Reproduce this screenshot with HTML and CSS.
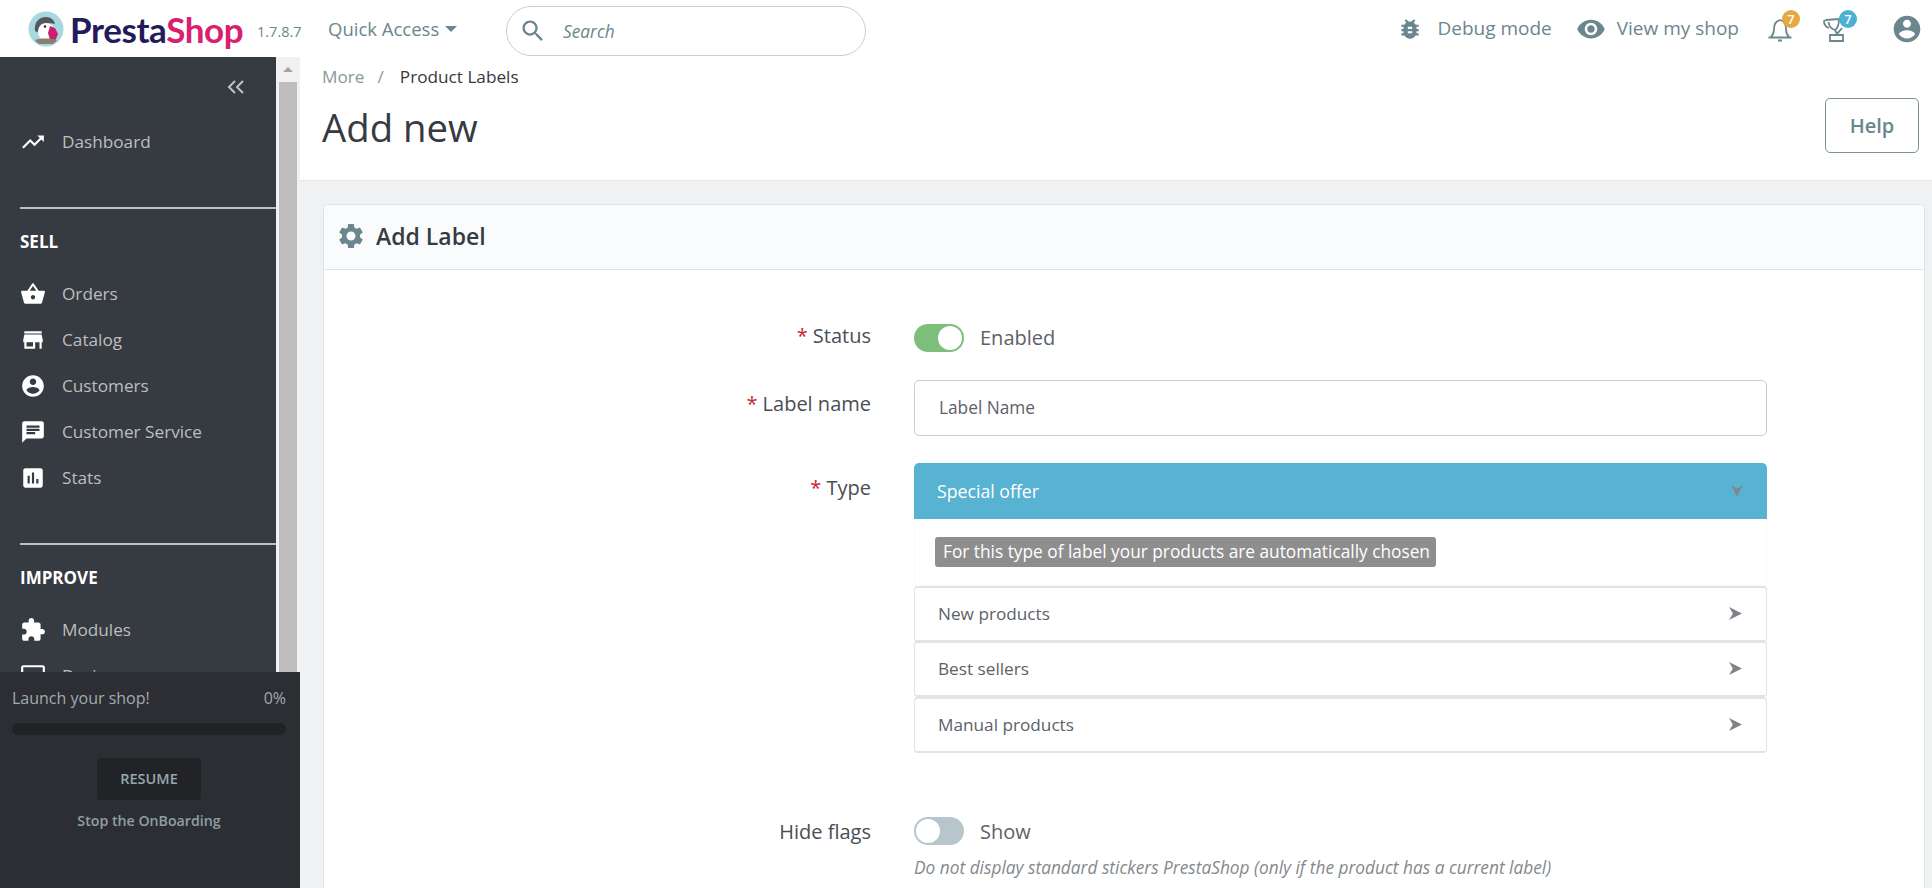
FILE: index.html
```html
<!DOCTYPE html>
<html lang="en">
<head>
<meta charset="utf-8">
<title>Add new - Product Labels</title>
<link rel="stylesheet" href="styles.css">
</head>
<body>
<header class="topbar">
  <div class="logo">
    <svg class="puffin" viewBox="0 0 36 36">
      <circle cx="18" cy="18" r="17.5" fill="#a6d8e0"/>
      <path d="M7 20C6 11 11 6 18 6c5 0 8 3 9 7-3-1-6-1-9 0-2 1-3 1-5 3l-2 6z" fill="#55575c"/>
      <path d="M10 21c0-5 3-9 8-9 5 0 8 3 8 8 0 6-4 9-8 9s-8-3-8-8z" fill="#fff"/>
      <circle cx="17" cy="15.5" r="1.3" fill="#333"/>
      <path d="M22 15l5 2 3 6-3 7-5-1-2-7z" fill="#c91f6c"/>
      <path d="M7 29c5-2 17-2 22 0-1 2-3 3-4 4H11c-1-1-3-2-4-4z" fill="#8a7f70"/>
    </svg>
    <span class="wordmark"><span class="presta">Presta</span><span class="shop">Shop</span></span>
  </div>
  <span class="version">1.7.8.7</span>
  <span class="quick">Quick Access<i class="caret"></i></span>
  <div class="search">
    <svg class="ic ic-search" viewBox="0 0 24 24"><path d="M15.5 14h-.79l-.28-.27C15.41 12.59 16 11.11 16 9.5 16 5.91 13.09 3 9.5 3S3 5.91 3 9.5 5.91 16 9.5 16c1.61 0 3.09-.59 4.23-1.57l.27.28v.79l5 4.99L20.49 19l-4.99-5zm-6 0C7.01 14 5 11.99 5 9.5S7.01 5 9.5 5 14 7.01 14 9.5 11.99 14 9.5 14z"/></svg>
    <span>Search</span>
  </div>
  <nav class="topright">
    <span class="toplink toplink-debug">
      <svg class="ic ic-top" viewBox="0 0 24 24"><path d="M20 8h-2.81c-.45-.78-1.07-1.45-1.82-1.96L17 4.41 15.59 3l-2.17 2.17C12.96 5.06 12.49 5 12 5c-.49 0-.96.06-1.41.17L8.41 3 7 4.41l1.62 1.63C7.88 6.55 7.26 7.22 6.81 8H4v2h2.09c-.05.33-.09.66-.09 1v1H4v2h2v1c0 .34.04.67.09 1H4v2h2.81c1.04 1.79 2.97 3 5.19 3s4.15-1.21 5.19-3H20v-2h-2.09c.05-.33.09-.66.09-1v-1h2v-2h-2v-1c0-.34-.04-.67-.09-1H20V8zm-6 8h-4v-2h4v2zm0-4h-4v-2h4v2z"/></svg>
      <span class="toptext">Debug mode</span>
    </span>
    <span class="toplink toplink-view">
      <svg class="ic ic-eye" viewBox="0 0 24 24"><path d="M12 4.5C7 4.5 2.73 7.61 1 12c1.73 4.39 6 7.5 11 7.5s9.27-3.11 11-7.5c-1.73-4.39-6-7.5-11-7.5zM12 17c-2.76 0-5-2.24-5-5s2.24-5 5-5 5 2.24 5 5-2.24 5-5 5zm0-8c-1.66 0-3 1.34-3 3s1.34 3 3 3 3-1.34 3-3-1.34-3-3-3z"/></svg>
      <span class="toptext">View my shop</span>
    </span>
    <span class="notif notif-bell">
      <svg class="ic ic-bell" viewBox="0 0 30 30"><path class="outline" d="M6 23c2-2 3-4 3-8 0-5 2-8 6-9M15 6c4 1 6 4 6 9 0 4 1 6 3 8M3.500 23.500h23M13 26.500h4"/></svg>
      <b class="badge badge-orange">7</b>
    </span>
    <span class="notif notif-trophy">
      <svg class="ic ic-bell" viewBox="0 0 30 30"><path class="outline" d="M5 6l13-1c0 5-1 9-4 11-3-1-6-4-6.500-8M5 6l-2 1c0 3 2 6 5 7M14 16l2 4 5-6M9 21h13v6H9z"/></svg>
      <b class="badge badge-blue">7</b>
    </span>
    <svg class="ic ic-avatar" viewBox="0 0 24 24"><path d="M12 2C6.48 2 2 6.48 2 12s4.48 10 10 10 10-4.48 10-10S17.52 2 12 2zm0 3c1.66 0 3 1.34 3 3s-1.34 3-3 3-3-1.34-3-3 1.34-3 3-3zm0 14.2c-2.5 0-4.71-1.28-6-3.22.03-1.99 4-3.08 6-3.08 1.99 0 5.97 1.09 6 3.08-1.29 1.94-3.5 3.22-6 3.22z"/></svg>
  </nav>
</header>

<div class="layout">
  <aside class="sidebar">
    <div class="menu">
      <div class="collapse">
        <svg class="ic-collapse" viewBox="0 0 18 14"><path d="M8 1L2 7l6 6M16 1l-6 6 6 6"/></svg>
      </div>
      <a class="item item-dash">
        <svg class="ic ic-side" viewBox="0 0 24 24"><path d="M16 6l2.29 2.29-4.88 4.88-4-4L2 16.59 3.41 18l6-6 4 4 6.3-6.29L22 12V6z"/></svg>
        Dashboard
      </a>
      <div class="rule rule-first"></div>
      <div class="section">SELL</div>
      <a class="item">
        <svg class="ic ic-side" viewBox="0 0 24 24"><path d="M17.21 9l-4.38-6.56c-.19-.28-.51-.42-.83-.42-.32 0-.64.14-.83.43L6.79 9H2c-.55 0-1 .45-1 1 0 .09.01.18.04.27l2.54 9.27c.23.84 1 1.46 1.92 1.46h13c.92 0 1.69-.62 1.93-1.46l2.54-9.27L23 10c0-.55-.45-1-1-1h-4.79zM9 9l3-4.4L15 9H9zm3 8c-1.1 0-2-.9-2-2s.9-2 2-2 2 .9 2 2-.9 2-2 2z"/></svg>
        Orders
      </a>
      <a class="item">
        <svg class="ic ic-side" viewBox="0 0 24 24"><path d="M20 4H4v2h16V4zm1 10v-2l-1-5H4l-1 5v2h1v6h10v-6h4v6h2v-6h1zm-9 4H6v-4h6v4z"/></svg>
        Catalog
      </a>
      <a class="item">
        <svg class="ic ic-side" viewBox="0 0 24 24"><path d="M12 2C6.48 2 2 6.48 2 12s4.48 10 10 10 10-4.48 10-10S17.52 2 12 2zm0 3c1.66 0 3 1.34 3 3s-1.34 3-3 3-3-1.34-3-3 1.34-3 3-3zm0 14.2c-2.5 0-4.71-1.28-6-3.22.03-1.99 4-3.08 6-3.08 1.99 0 5.97 1.09 6 3.08-1.29 1.94-3.5 3.22-6 3.22z"/></svg>
        Customers
      </a>
      <a class="item">
        <svg class="ic ic-side" viewBox="0 0 24 24"><path d="M20 2H4c-1.1 0-1.99.9-1.99 2L2 22l4-4h14c1.1 0 2-.9 2-2V4c0-1.1-.9-2-2-2zM6 9h12v2H6V9zm8 5H6v-2h8v2zm4-6H6V6h12v2z"/></svg>
        Customer Service
      </a>
      <a class="item">
        <svg class="ic ic-side" viewBox="0 0 24 24"><path d="M19 3H5c-1.1 0-2 .9-2 2v14c0 1.1.9 2 2 2h14c1.1 0 2-.9 2-2V5c0-1.1-.9-2-2-2zM9 17H7v-7h2v7zm4 0h-2V7h2v10zm4 0h-2v-4h2v4z"/></svg>
        Stats
      </a>
      <div class="rule rule-second"></div>
      <div class="section">IMPROVE</div>
      <a class="item">
        <svg class="ic ic-side" viewBox="0 0 24 24"><path d="M20.5 11H19V7c0-1.1-.9-2-2-2h-4V3.5C13 2.12 11.88 1 10.5 1S8 2.12 8 3.5V5H4c-1.1 0-1.99.9-1.99 2v3.8H3.5c1.49 0 2.7 1.21 2.7 2.7s-1.21 2.7-2.7 2.7H2V20c0 1.1.9 2 2 2h3.8v-1.5c0-1.49 1.21-2.7 2.7-2.7 1.49 0 2.7 1.21 2.7 2.7V22H17c1.1 0 2-.9 2-2v-4h1.5c1.38 0 2.5-1.12 2.5-2.5S21.88 11 20.5 11z"/></svg>
        Modules
      </a>
      <a class="item">
        <svg class="ic ic-side" viewBox="0 0 24 24"><path d="M21 2H3c-1.1 0-2 .9-2 2v12c0 1.1.9 2 2 2h7v2H8v2h8v-2h-2v-2h7c1.1 0 2-.9 2-2V4c0-1.1-.9-2-2-2zm0 14H3V4h18v12z"/></svg>
        Design
      </a>
    </div>
    <div class="scrollbar">
      <div class="scroll-up"><i></i></div>
      <div class="scroll-thumb"></div>
    </div>
    <div class="onboarding">
      <div class="ob-head"><span>Launch your shop!</span><span>0%</span></div>
      <div class="ob-bar"></div>
      <div class="ob-btn">RESUME</div>
      <div class="ob-stop">Stop the OnBoarding</div>
    </div>
  </aside>

  <main class="main">
    <div class="pagehead">
      <div class="crumbs"><span class="crumb-more">More</span><span class="crumb-sep">/</span><span class="crumb-cur">Product Labels</span></div>
      <div class="titlerow">
        <h1>Add new</h1>
        <a class="help">Help</a>
      </div>
    </div>
    <section class="card">
      <div class="card-head">
        <svg class="ic ic-gear" viewBox="0 0 24 24"><path d="M19.14 12.94c.04-.3.06-.61.06-.94 0-.32-.02-.64-.07-.94l2.03-1.58c.18-.14.23-.41.12-.61l-1.92-3.32c-.12-.22-.37-.29-.59-.22l-2.39.96c-.5-.38-1.03-.7-1.62-.94l-.36-2.54c-.04-.24-.24-.41-.48-.41h-3.84c-.24 0-.43.17-.47.41l-.36 2.54c-.59.24-1.13.57-1.62.94l-2.39-.96c-.22-.08-.47 0-.59.22L2.74 8.87c-.12.21-.08.47.12.61l2.03 1.58c-.05.3-.09.63-.09.94s.02.64.07.94l-2.03 1.58c-.18.14-.23.41-.12.61l1.92 3.32c.12.22.37.29.59.22l2.39-.96c.5.38 1.03.7 1.62.94l.36 2.54c.05.24.24.41.48.41h3.84c.24 0 .44-.17.47-.41l.36-2.54c.59-.24 1.13-.56 1.62-.94l2.39.96c.22.08.47 0 .59-.22l1.92-3.32c.12-.22.07-.47-.12-.61l-2.01-1.58zM12 15.6c-1.98 0-3.6-1.62-3.6-3.6s1.62-3.6 3.6-3.6 3.6 1.62 3.6 3.6-1.62 3.6-3.6 3.6z"/></svg>
        <span>Add Label</span>
      </div>
      <div class="form">
        <div class="row row-status">
          <label class="lbl lbl-status"><em>*</em> Status</label>
          <div class="field switchline">
            <span class="switch switch-on"><i></i></span>
            <span class="switch-text">Enabled</span>
          </div>
        </div>
        <div class="row row-name">
          <label class="lbl lbl-name"><em>*</em> Label name</label>
          <div class="field"><div class="input">Label Name</div></div>
        </div>
        <div class="row row-type">
          <label class="lbl lbl-type"><em>*</em> Type</label>
          <div class="field">
            <div class="acc-active">
              <span>Special offer</span>
              <svg class="chev" viewBox="0 0 14 14"><path d="M7 13L1 1l6 3.500L13 1z"/></svg>
            </div>
            <div class="acc-body"><span class="chip">For this type of label your products are automatically chosen</span></div>
            <div class="acc-item"><span>New products</span><svg class="arrow" viewBox="0 0 14 14"><path d="M13 7L1 1l3.500 6L1 13z"/></svg></div>
            <div class="acc-item"><span>Best sellers</span><svg class="arrow" viewBox="0 0 14 14"><path d="M13 7L1 1l3.500 6L1 13z"/></svg></div>
            <div class="acc-item"><span>Manual products</span><svg class="arrow" viewBox="0 0 14 14"><path d="M13 7L1 1l3.500 6L1 13z"/></svg></div>
          </div>
        </div>
        <div class="row row-flags">
          <label class="lbl lbl-flags">Hide flags</label>
          <div class="field">
            <div class="switchline">
              <span class="switch switch-off"><i></i></span>
              <span>Show</span>
            </div>
            <p class="hint">Do not display standard stickers PrestaShop (only if the product has a current label)</p>
          </div>
        </div>
      </div>
    </section>
  </main>
</div>
</body>
</html>
```
FILE: styles.css
```css
* { box-sizing: border-box; }
html, body { margin: 0; height: 100%; overflow: hidden; }
body { font-family: "Open Sans", "Liberation Sans", sans-serif; color: #363a41; background: #eff1f2; }
.ic { fill: currentColor; display: block; flex: none; }

/* top bar */
.topbar { height: 57px; background: #fff; display: flex; align-items: center; position: relative; }
.logo { display: flex; align-items: center; margin-left: 28px; width: 229px; flex: none; gap: 6px; }
.puffin { width: 36px; height: 36px; flex: none; }
.wordmark { font-family: Lato, sans-serif; font-weight: 700; font-size: 35px; letter-spacing: -0.4px; line-height: 36px; }
.presta { color: #251b5b; }
.shop { color: #d8206f; }
.version { font-size: 14.5px; color: #6c868e; width: 71px; flex: none; padding-top: 5px; }
.quick { font-size: 18.5px; color: #6c868e; width: 178px; flex: none; display: flex; align-items: center; }
.caret { width: 0; height: 0; border: 6px solid transparent; border-top-color: #6c868e; border-bottom: 0; margin-left: 6px; }
.search { width: 360px; height: 50px; margin-top: 5px; border: 1px solid #c5d0d4; border-radius: 25px; display: flex; align-items: center; padding-left: 12px; color: #6c868e; font-style: italic; font-size: 17.3px; flex: none; }
.ic-search { width: 28px; height: 28px; margin-right: 16px; color: #6c868e; }
.topright { margin-left: auto; display: flex; align-items: center; padding-right: 9px; color: #6c868e; font-size: 19px; }
.toplink { display: flex; align-items: center; }
.toplink-debug { margin-right: 24px; }
.toplink-view { margin-right: 26px; }
.toptext { margin-bottom: 2px; }
.ic-top { width: 26px; height: 26px; margin-right: 14px; }
.ic-eye { width: 30px; height: 30px; margin-right: 11px; }
.notif { position: relative; display: block; }
.notif-bell { margin-right: 26px; }
.notif-trophy { margin-right: 40px; }
.ic-bell { width: 30px; height: 30px; }
.outline { fill: none; stroke: currentColor; stroke-width: 1.8; }
.badge { position: absolute; top: -4px; width: 18px; height: 18px; border-radius: 50%; color: #fff; font-size: 13px; font-weight: 600; line-height: 18px; text-align: center; }
.badge-orange { background: #e5a93f; left: 17px; }
.badge-blue { background: #4bb0d3; left: 18px; }
.ic-avatar { width: 32px; height: 32px; }

/* layout */
.layout { display: flex; height: 831px; }

/* sidebar */
.sidebar { width: 300px; flex: none; display: flex; position: relative; overflow: hidden; background: #f1f1f1; }
.menu { width: 276px; flex: none; background: #363a41; color: #bebebe; font-size: 17.2px; }
.collapse { height: 60px; display: flex; justify-content: flex-end; align-items: center; padding: 0 31px 0 0; }
.ic-collapse { width: 18px; height: 14px; fill: none; stroke: #bdc5c9; stroke-width: 2; }
.item { height: 46px; display: flex; align-items: center; padding: 0 0 2px 20px; }
.item-dash { margin-top: 2px; }
.ic-side { width: 26px; height: 26px; color: #fff; margin: 2px 16px 0 0; }
.rule { height: 2px; background: #bcc3c7; margin-left: 20px; }
.rule-first { margin-top: 42px; }
.rule-second { margin-top: 42px; }
.section { color: #fff; font-weight: 700; font-size: 17px; height: 62px; padding: 21px 0 0 20px; line-height: 24px; }
.scrollbar { width: 24px; flex: none; background: #f1f1f1; padding: 0 3px; }
.scroll-up { height: 25px; display: flex; align-items: center; justify-content: center; }
.scroll-up i { width: 0; height: 0; border: 5px solid transparent; border-bottom-color: #a3a3a3; border-top: 0; }
.scroll-thumb { height: 800px; background: #bdbdbd; }
.onboarding { position: absolute; left: 0; bottom: 0; width: 300px; height: 216px; background: #2c2e33; color: #a0abaf; padding: 0 14px 0 12px; }
.ob-head { display: flex; justify-content: space-between; font-size: 16px; padding-top: 15px; line-height: 22px; }
.ob-bar { height: 12px; margin-top: 14px; background: #202226; border-radius: 6px; }
.ob-btn { width: 104px; height: 42px; margin: 23px auto 0; background: #222326; border-radius: 4px; text-align: center; line-height: 42px; font-size: 14.5px; font-weight: 600; color: #98a7ad; }
.ob-stop { text-align: center; font-size: 14.2px; font-weight: 600; margin-top: 11px; line-height: 20px; color: #8e9ea4; }

/* main */
.main { flex: 1; min-width: 0; }
.pagehead { height: 124px; background: #fff; border-bottom: 1px solid #e3e5e6; padding: 0 13px 0 22px; }
.crumbs { font-size: 17.2px; line-height: 22px; padding-top: 9px; display: flex; }
.crumb-more { color: #8a979c; }
.crumb-sep { color: #8a979c; margin: 0 16px 0 13px; }
.crumb-cur { color: #363a41; }
.titlerow { display: flex; justify-content: space-between; align-items: flex-start; }
h1 { margin: 14px 0 0; font-weight: 400; font-size: 38.3px; line-height: 50px; color: #363a41; }
.help { width: 94px; height: 55px; margin-top: 10px; border: 1.5px solid #7d939a; border-radius: 5px; color: #6c868e; font-size: 20px; font-weight: 600; display: flex; align-items: center; justify-content: center; }

.card { margin: 23px 7px 0 23px; background: #fff; border: 1px solid #dfe3e5; border-bottom: 0; border-radius: 5px 5px 0 0; height: 684px; }
.card-head { height: 65px; background: #fafbfc; border-bottom: 1px solid #dfe3e5; display: flex; align-items: center; padding: 0 0 2px 12px; font-size: 23px; font-weight: 600; border-radius: 5px 5px 0 0; }
.ic-gear { width: 30px; height: 30px; color: #6c868e; margin-right: 10px; }
.form { padding-top: 54px; }
.row { display: flex; }
.lbl { width: 547px; text-align: right; font-size: 20px; line-height: 28px; flex: none; color: #4a4e55; }
.lbl em { color: #c9253a; font-style: normal; }
.lbl-status { line-height: 24px; }
.lbl-flags { padding-top: 1px; }
.field { width: 853px; margin-left: 43px; font-size: 20px; flex: none; color: #5c6268; }
.switchline { display: flex; align-items: center; gap: 16px; height: 28px; }
.switch-text { margin-bottom: 2px; }
.switch { width: 50px; height: 28px; border-radius: 14px; display: flex; align-items: center; padding: 2px; }
.switch i { width: 24px; height: 24px; background: #fff; border-radius: 50%; display: block; }
.switch-on { background: #7dbf7a; justify-content: flex-end; }
.switch-off { background: #b7c6cc; }
.row-name { margin-top: 28px; }
.lbl-name { padding-top: 10px; }
.input { height: 56px; border: 1px solid #c9cdd0; border-radius: 5px; display: flex; align-items: center; padding: 0 0 2px 24px; font-size: 17.3px; }
.row-type { margin-top: 27px; }
.lbl-type { padding-top: 11px; }
.acc-active { height: 56px; background: #58b3d3; border-radius: 5px 5px 0 0; color: #fff; font-size: 17.7px; display: flex; align-items: center; justify-content: space-between; padding: 0 23px 0 23px; }
.chev { width: 14px; height: 14px; fill: #7f8a90; }
.acc-body { height: 67px; padding-top: 18px; border: 1px solid #fafafa; border-top: 0; padding-left: 20px; }
.chip { display: inline-block; height: 30px; line-height: 30px; background: #8e8e8e; color: #fff; border-radius: 3px; font-size: 17.3px; padding: 0 6px 0 8px; }
.acc-item { height: 56px; margin-top: -1px; border: 2px solid #e3e3e3; border-width: 2px 1px; border-radius: 4px; display: flex; align-items: center; justify-content: space-between; padding: 0 23px 2px 23px; font-size: 17.2px; background: #fff; }
.acc-body + .acc-item { margin-top: 0; }
.acc-item + .acc-item + .acc-item { margin-top: 0; }
.arrow { width: 15px; height: 15px; fill: #7f8288; }
.row-flags { margin-top: 64px; }
.hint { margin: 13px 0 0; font-size: 17.3px; font-style: italic; color: #84898d; line-height: 20px; }
```
